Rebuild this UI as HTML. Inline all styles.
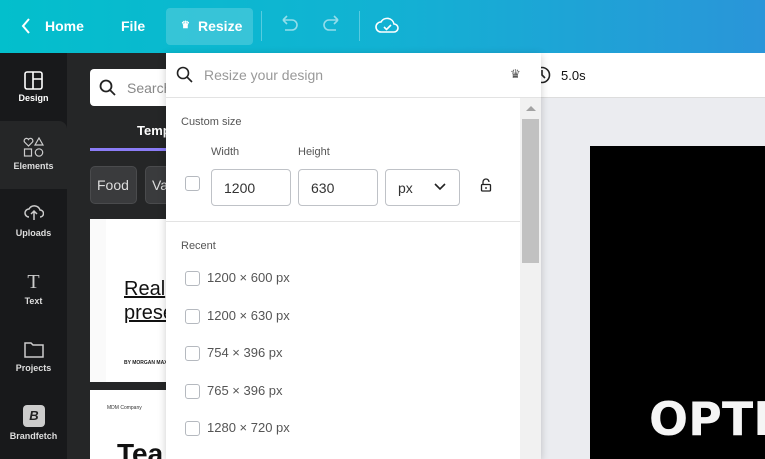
<!DOCTYPE html>
<html><head><style>
*{box-sizing:border-box;margin:0;padding:0}
html,body{width:765px;height:459px;overflow:hidden}
body{font-family:"Liberation Sans",sans-serif;position:relative;background:#ebecf0}
.a{position:absolute}
.top{left:0;top:0;width:765px;height:53px;background:linear-gradient(90deg,#03bfcc 0%,#12b2d3 50%,#2a95d9 100%);color:#fff;font-weight:bold;font-size:14px}
.side{left:0;top:53px;width:67px;height:406px;background:#18191b;color:#ddd;font-size:9px;font-weight:bold;text-align:center}
.panel{left:67px;top:53px;width:100px;height:406px;background:#252627;overflow:hidden}
.pop{left:166px;top:53px;width:375px;height:406px;background:#fff;box-shadow:0 2px 8px rgba(0,0,0,.2);color:#555}
.cb{width:15px;height:15px;border:1px solid #b5b9bf;border-radius:3px;background:#fff}
.inp{height:37px;border:1px solid #bfc2c7;border-radius:4px;font-size:14px;color:#333;padding:10px 12px}
.rec{font-size:13px;color:#555}
</style></head><body>
<div class="a top">
 <svg class="a" style="left:20px;top:17px" width="12" height="18"><path d="M9 2L3 9l6 7" stroke="#fff" stroke-width="2" fill="none"/></svg>
 <div class="a" style="left:45px;top:18px">Home</div>
 <div class="a" style="left:121px;top:18px">File</div>
 <div class="a" style="left:166px;top:8px;width:87px;height:37px;background:rgba(255,255,255,.18);border-radius:4px"></div>
 <div class="a" style="left:181px;top:20px;font-size:10px">♛</div>
 <div class="a" style="left:198px;top:18px">Resize</div>
 <div class="a" style="left:261px;top:11px;width:1px;height:30px;background:rgba(255,255,255,.3)"></div>
 <svg class="a" style="left:278px;top:15px" width="22" height="20"><path d="M5 5h9a5 5 0 010 10H7M5 5l4-4M5 5l4 4" stroke="rgba(255,255,255,.55)" stroke-width="1.6" fill="none"/></svg>
 <svg class="a" style="left:321px;top:15px" width="22" height="20"><path d="M17 5H8a5 5 0 000 10h7M17 5l-4-4M17 5l-4 4" stroke="rgba(255,255,255,.55)" stroke-width="1.6" fill="none"/></svg>
 <div class="a" style="left:359px;top:11px;width:1px;height:30px;background:rgba(255,255,255,.3)"></div>
 <svg class="a" style="left:375px;top:15px" width="24" height="20"><path d="M6 17a5 5 0 010-10 7 7 0 0113 2 4 4 0 010 8z" stroke="#fff" stroke-width="1.6" fill="none"/><path d="M9 12l2.5 2.5L16 10" stroke="#fff" stroke-width="1.6" fill="none"/></svg>
</div>
<div class="a side">
 <svg class="a" style="left:24px;top:18px" width="19" height="19"><rect x="1" y="1" width="17" height="17" rx="2" stroke="#fff" stroke-width="1.6" fill="none"/><path d="M9 1v17M9 8h9" stroke="#fff" stroke-width="1.6"/></svg>
 <div class="a" style="left:0;width:67px;top:40px;color:#fff">Design</div>
 <div class="a" style="left:0;top:68px;width:67px;height:68px;background:#252627;border-radius:0 8px 0 0"></div>
 <svg class="a" style="left:23px;top:84px" width="22" height="21"><path d="M5.5 9L1.5 5a2.2 2.2 0 014-2.5A2.2 2.2 0 019.5 5z" stroke="#ccc" stroke-width="1.2" fill="none"/><path d="M16 1l4 7h-8z" stroke="#ccc" stroke-width="1.2" fill="none"/><rect x="1.5" y="12" width="7" height="7" stroke="#ccc" stroke-width="1.2" fill="none"/><circle cx="16" cy="15.5" r="3.7" stroke="#ccc" stroke-width="1.2" fill="none"/></svg>
 <div class="a" style="left:0;width:67px;top:108px">Elements</div>
 <div class="a" style="left:0;width:67px;top:175px">Uploads</div>
 <svg class="a" style="left:24px;top:150px" width="20" height="18"><path d="M5 14a4 4 0 010-8 6 6 0 0111 1 3.5 3.5 0 010 7M10 17V9M7 11l3-3 3 3" stroke="#ccc" stroke-width="1.5" fill="none"/></svg>
 <div class="a" style="left:0;width:67px;top:218px;font-size:20px;font-family:'Liberation Serif';font-weight:normal;color:#ccc">T</div>
 <div class="a" style="left:0;width:67px;top:243px">Text</div>
 <svg class="a" style="left:24px;top:288px" width="20" height="17"><path d="M1 2h6l2 2h10v12H1z" stroke="#ccc" stroke-width="1.5" fill="none"/></svg>
 <div class="a" style="left:0;width:67px;top:310px">Projects</div>
 <div class="a" style="left:23px;top:352px;width:22px;height:22px;background:#ccc;border-radius:4px;color:#222;font-size:13px;line-height:22px;font-style:italic">B</div>
 <div class="a" style="left:0;width:67px;top:378px">Brandfetch</div>
</div>
<div class="a panel">
 <div class="a" style="left:23px;top:16px;width:90px;height:37px;background:#fff;border-radius:4px"></div>
 <svg class="a" style="left:32px;top:26px" width="18" height="18"><circle cx="7" cy="7" r="5.5" stroke="#222" stroke-width="1.8" fill="none"/><path d="M11 11l5 5" stroke="#222" stroke-width="1.8"/></svg>
 <div class="a" style="left:60px;top:27px;color:#888;font-size:14px">Search</div>
 <div class="a" style="left:70px;top:70px;color:#fff;font-weight:bold;font-size:13px">Temp</div>
 <div class="a" style="left:23px;top:95px;width:80px;height:3px;background:#8b7cf6"></div>
 <div class="a" style="left:23px;top:113px;width:47px;height:38px;background:#3a3b3d;border:1px solid #4a4b4d;border-radius:5px;color:#ddd;font-size:14px;padding:10px 6px">Food</div>
 <div class="a" style="left:78px;top:113px;width:40px;height:38px;background:#3a3b3d;border:1px solid #4a4b4d;border-radius:5px;color:#ddd;font-size:14px;padding:10px 6px">Va</div>
 <div class="a" style="left:23px;top:166px;width:80px;height:163px;background:#fff;border-left:16px solid #fafafa"></div>
 <div class="a" style="left:57px;top:224px;font-size:20px;color:#111;text-decoration:underline;line-height:24px;white-space:nowrap">Real<br>prese</div>
 <div class="a" style="left:57px;top:307px;font-size:5px;color:#222;font-weight:bold;white-space:nowrap">BY MORGAN MAX</div>
 <div class="a" style="left:23px;top:337px;width:80px;height:80px;background:#fff"></div>
 <div class="a" style="left:40px;top:352px;font-size:5px;color:#333;white-space:nowrap">MDM Company</div>
 <div class="a" style="left:50px;top:385px;font-size:28px;color:#111;font-weight:bold">Tea</div>
</div>
<div class="a" style="left:541px;top:53px;width:224px;height:45px;background:#fff;border-bottom:1px solid #ddd"></div>
<svg class="a" style="left:533px;top:66px" width="18" height="18"><circle cx="9" cy="9" r="7.5" stroke="#222" stroke-width="1.6" fill="none"/><path d="M9 4v5l3 3" stroke="#222" stroke-width="1.6" fill="none"/></svg>
<div class="a" style="left:561px;top:68px;font-size:13px;color:#111">5.0s</div>
<div class="a" style="left:590px;top:146px;width:175px;height:313px;background:#000;overflow:hidden">
<div class="a" style="left:59px;top:246px;font-size:46px;font-weight:bold;color:#f5f5f5;font-family:'DejaVu Sans';white-space:nowrap">OPTI</div></div>
<div class="a pop">
 <svg class="a" style="left:10px;top:13px" width="18" height="18"><circle cx="7" cy="7" r="5.5" stroke="#222" stroke-width="1.6" fill="none"/><path d="M11 11l5 5" stroke="#222" stroke-width="1.6"/></svg>
 <div class="a" style="left:38px;top:14px;font-size:14px;color:#999">Resize your design</div>
 <div class="a" style="left:344px;top:14px;font-size:12px;color:#555">♛</div>
 <div class="a" style="left:0;top:44px;width:375px;height:1px;background:#e3e3e3"></div>
 <div class="a" style="left:354px;top:45px;width:21px;height:361px;background:#f1f1f1"></div>
 <div class="a" style="left:356px;top:66px;width:17px;height:144px;background:#c1c1c1"></div>
 <div class="a" style="left:360px;top:53px;width:0;height:0;border:5px solid transparent;border-bottom:5px solid #a3a3a3;border-top:0"></div>
 <div class="a" style="left:15px;top:63px;font-size:11px">Custom size</div>
 <div class="a" style="left:45px;top:93px;font-size:11px">Width</div>
 <div class="a" style="left:132px;top:93px;font-size:11px">Height</div>
 <div class="a cb" style="left:19px;top:123px"></div>
 <div class="a inp" style="left:45px;top:116px;width:80px">1200</div>
 <div class="a inp" style="left:132px;top:116px;width:80px">630</div>
 <div class="a inp" style="left:219px;top:116px;width:75px">px</div>
 <svg class="a" style="left:268px;top:130px" width="12" height="8"><path d="M1 1l5 5 5-5" stroke="#222" stroke-width="1.6" fill="none"/></svg>
 <svg class="a" style="left:314px;top:125px" width="12" height="14"><path d="M3 6V4a3 3 0 016 0" stroke="#222" stroke-width="1.3" fill="none"/><rect x="1.5" y="6.5" width="9" height="6.5" rx="1" stroke="#222" stroke-width="1.3" fill="none"/><path d="M6 9v2" stroke="#222" stroke-width="1.3"/></svg>
 <div class="a" style="left:0;top:168px;width:354px;height:1px;background:#e3e3e3"></div>
 <div class="a" style="left:15px;top:187px;font-size:11px">Recent</div>
 <div class="a cb" style="left:19px;top:218px"></div><div class="a rec" style="left:41px;top:217px">1200 × 600 px</div>
 <div class="a cb" style="left:19px;top:256px"></div><div class="a rec" style="left:41px;top:255px">1200 × 630 px</div>
 <div class="a cb" style="left:19px;top:293px"></div><div class="a rec" style="left:41px;top:292px">754 × 396 px</div>
 <div class="a cb" style="left:19px;top:331px"></div><div class="a rec" style="left:41px;top:330px">765 × 396 px</div>
 <div class="a cb" style="left:19px;top:368px"></div><div class="a rec" style="left:41px;top:367px">1280 × 720 px</div>
</div>
</body></html>
